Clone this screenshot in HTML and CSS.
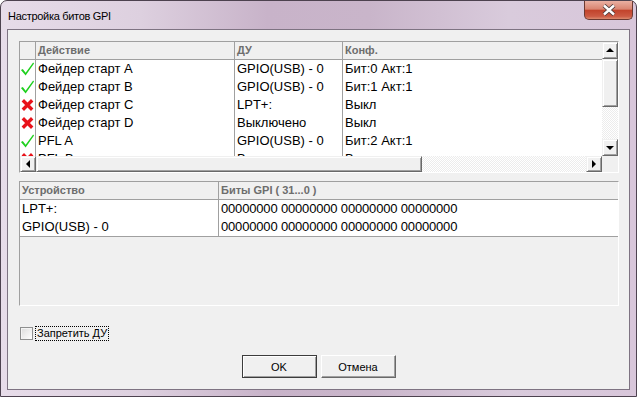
FILE: index.html
```html
<!DOCTYPE html>
<html lang="ru">
<head>
    <meta charset="UTF-8">
    <title>Настройка битов GPI</title>
    <link rel="stylesheet" href="styles.css">
</head>
<body>
    <div class="window">
        <div class="titlebar">
            <span class="title">Настройка битов GPI</span>
            <div class="close">
                <svg width="14" height="12" viewBox="0 0 14 12">
                    <path d="M2 1.5 L12 10.5 M12 1.5 L2 10.5" stroke="#4a3a3a" stroke-width="4.2" fill="none"/>
                    <path d="M2 1.5 L12 10.5 M12 1.5 L2 10.5" stroke="#fff" stroke-width="2.4" fill="none"/>
                </svg>
            </div>
        </div>

        <div class="client">
            <!-- actions grid -->
            <div class="grid actions">
                <div class="grid-main">
                    <div class="table">
                        <div class="row head">
                            <div class="cell"></div>
                            <div class="cell">Действие</div>
                            <div class="cell">ДУ</div>
                            <div class="cell">Конф.</div>
                        </div>
                        <div class="row">
                            <div class="cell ico"><svg class="ok" viewBox="0 0 16 16"><path d="M1 9 L3 8 L6 12 L14 1 L15 2 L6 15 Z"/></svg></div>
                            <div class="cell">Фейдер старт A</div>
                            <div class="cell">GPIO(USB) - 0</div>
                            <div class="cell">Бит:0 Акт:1</div>
                        </div>
                        <div class="row">
                            <div class="cell ico"><svg class="ok" viewBox="0 0 16 16"><path d="M1 9 L3 8 L6 12 L14 1 L15 2 L6 15 Z"/></svg></div>
                            <div class="cell">Фейдер старт B</div>
                            <div class="cell">GPIO(USB) - 0</div>
                            <div class="cell">Бит:1 Акт:1</div>
                        </div>
                        <div class="row">
                            <div class="cell ico"><svg class="no" viewBox="0 0 16 16"><path d="M3 3 L13 13 M13 3 L3 13"/></svg></div>
                            <div class="cell">Фейдер старт C</div>
                            <div class="cell">LPT+:</div>
                            <div class="cell">Выкл</div>
                        </div>
                        <div class="row">
                            <div class="cell ico"><svg class="no" viewBox="0 0 16 16"><path d="M3 3 L13 13 M13 3 L3 13"/></svg></div>
                            <div class="cell">Фейдер старт D</div>
                            <div class="cell">Выключено</div>
                            <div class="cell">Выкл</div>
                        </div>
                        <div class="row">
                            <div class="cell ico"><svg class="ok" viewBox="0 0 16 16"><path d="M1 9 L3 8 L6 12 L14 1 L15 2 L6 15 Z"/></svg></div>
                            <div class="cell">PFL A</div>
                            <div class="cell">GPIO(USB) - 0</div>
                            <div class="cell">Бит:2 Акт:1</div>
                        </div>
                        <div class="row">
                            <div class="cell ico"><svg class="no" viewBox="0 0 16 16"><path d="M3 3 L13 13 M13 3 L3 13"/></svg></div>
                            <div class="cell">PFL B</div>
                            <div class="cell">Выключено</div>
                            <div class="cell">Выкл</div>
                        </div>
                    </div>
                    <div class="vscroll">
                        <div class="sb-btn v"><span class="arr up"></span></div>
                        <div class="sb-thumb v-thumb"></div>
                        <div class="sb-track"></div>
                        <div class="sb-btn v"><span class="arr down"></span></div>
                    </div>
                </div>
                <div class="hscroll">
                    <div class="sb-btn h"><span class="arr left"></span></div>
                    <div class="sb-thumb h-thumb"></div>
                    <div class="sb-track"></div>
                    <div class="sb-btn h"><span class="arr right"></span></div>
                    <div class="corner"></div>
                </div>
            </div>

            <!-- devices grid -->
            <div class="grid devices">
                <div class="row head">
                    <div class="cell">Устройство</div>
                    <div class="cell">Биты GPI ( 31...0 )</div>
                </div>
                <div class="row">
                    <div class="cell">LPT+:</div>
                    <div class="cell bits">00000000 00000000 00000000 00000000</div>
                </div>
                <div class="row last">
                    <div class="cell">GPIO(USB) - 0</div>
                    <div class="cell bits">00000000 00000000 00000000 00000000</div>
                </div>
            </div>

            <label class="check-row">
                <span class="checkbox"></span>
                <span class="check-label">Запретить ДУ</span>
            </label>

            <div class="buttons">
                <button class="btn default">OK</button>
                <button class="btn">Отмена</button>
            </div>
        </div>
    </div>
</body>
</html>
```

FILE: styles.css
```css
* {
    margin: 0;
    padding: 0;
    box-sizing: border-box;
}

html, body {
    width: 637px;
    height: 397px;
    overflow: hidden;
    background: #fff;
}

body {
    font-family: "Liberation Sans", Arial, sans-serif;
    color: #000;
}

.window {
    width: 637px;
    height: 397px;
    border: 1px solid #4d424f;
    border-radius: 7px 7px 0 0;
    background: linear-gradient(90deg, #e7dce9 0%, #ddd0df 22%, #c8b3c9 42%, #c9b5ca 58%, #d9cbdc 80%, #d8c6da 100%);
    display: flex;
    flex-direction: column;
}

.titlebar {
    height: 28px;
    display: flex;
    justify-content: space-between;
    padding-left: 7px;
}

.title {
    align-self: center;
    font-family: "Liberation Sans", Arial, sans-serif;
    font-size: 11px;
    letter-spacing: -0.3px;
    margin-top: 1px;
}

.close {
    width: 49px;
    height: 19px;
    margin-right: 3px;
    border: 1px solid #6b3a32;
    border-top: none;
    border-radius: 0 0 5px 5px;
    background: linear-gradient(#eab0a2, #d98471 45%, #c2442c 52%, #cc5a43 85%, #dc8a6e 100%);
    display: flex;
    align-items: center;
    justify-content: center;
}

.client {
    flex: 1;
    margin: 0 6px 6px;
    border: 1px solid #7e7382;
    background: #f0f0f0;
    padding: 11px 0 0 11px;
    display: flex;
    flex-direction: column;
}

.grid {
    width: 600px;
    border: 1px solid #a0a0a0;
    border-right-color: #fff;
    border-bottom-color: #fff;
}

.actions {
    height: 132px;
}

.grid-main {
    display: flex;
    height: 114px;
}

.table {
    flex: 1;
    overflow: hidden;
    background: #fff;
}

.row {
    display: grid;
    height: 18px;
    font-size: 13px;
    line-height: 18px;
}

.actions .row {
    grid-template-columns: 16px 199px 108px 1fr;
}

.cell {
    padding-left: 2px;
    border-right: 1px solid #a0a0a0;
    white-space: nowrap;
    overflow: hidden;
}

.row .cell:last-child {
    border-right: none;
}

.row.head {
    background: #f0f0f0;
    border-bottom: 1px solid #a0a0a0;
    font-size: 11px;
    font-weight: bold;
    color: #6d6d6d;
    line-height: 17px;
}

.ico {
    padding: 0;
    display: flex;
    align-items: center;
}

.ico svg {
    width: 16px;
    height: 16px;
}

.ok path {
    fill: #1ed01e;
}

.no path {
    stroke: #e8121a;
    stroke-width: 3.6;
    fill: none;
}

.bits {
    letter-spacing: -0.17px;
}

/* scrollbars */
.vscroll {
    width: 16px;
    display: flex;
    flex-direction: column;
}

.hscroll {
    display: flex;
    height: 16px;
}

.sb-btn, .sb-thumb {
    background: #f0f0f0;
    border: 1px solid;
    border-color: #f0f0f0 #696969 #696969 #f0f0f0;
    box-shadow: inset 1px 1px #fff, inset -1px -1px #a0a0a0;
    display: flex;
    align-items: center;
    justify-content: center;
}

.sb-btn.v {
    height: 17px;
}

.sb-btn.h {
    width: 16px;
}

.v-thumb {
    height: 48px;
}

.h-thumb {
    width: 386px;
}

.sb-track {
    flex: 1;
    background-color: #fff;
    background-image: repeating-conic-gradient(#ececec 0 25%, #fff 0 50%);
    background-size: 2px 2px;
}

.corner {
    width: 16px;
    background: #f0f0f0;
}

.arr {
    width: 0;
    height: 0;
    border: 4px solid transparent;
}

.arr.up {
    border-top: none;
    border-bottom-color: #000;
    margin-top: -1px;
}

.arr.down {
    border-bottom: none;
    border-top-color: #000;
}

.arr.left {
    border-left: none;
    border-right-color: #000;
}

.arr.right {
    border-right: none;
    border-left-color: #000;
}

/* devices grid */
.devices {
    margin-top: 8px;
    height: 125px;
    background: #f0f0f0;
}

.devices .row {
    grid-template-columns: 199px 1fr;
    background: #fff;
}

.devices .row.head {
    background: #f0f0f0;
}

.devices .row.last {
    height: 19px;
    border-bottom: 1px solid #a0a0a0;
}

/* checkbox and buttons */
.check-row {
    display: flex;
    align-items: center;
    gap: 3px;
    margin-top: 20px;
    margin-left: 1px;
    height: 15px;
}

.checkbox {
    width: 13px;
    height: 13px;
    border: 1px solid #8e8f8f;
    background: linear-gradient(135deg, #dcdcdc, #fff);
    box-shadow: inset 1px 1px #f4f4f4;
}

.check-label {
    font-size: 11px;
    padding: 0 1px;
    line-height: 13px;
    outline: 1px dotted #000;
}

.buttons {
    display: flex;
    justify-content: center;
    gap: 4px;
    margin-top: 14px;
    padding-right: 11px;
}

.btn {
    width: 75px;
    height: 23px;
    font-family: "Liberation Sans", Arial, sans-serif;
    font-size: 11px;
    color: #000;
    background: #f0f0f0;
    border: 1px solid;
    border-color: #fff #696969 #696969 #fff;
    box-shadow: inset -1px -1px #a0a0a0;
}

.btn.default {
    border: 1px solid #3c3c3c;
    box-shadow: inset 1px 1px #fff, inset -1px -1px #a0a0a0;
}
```
